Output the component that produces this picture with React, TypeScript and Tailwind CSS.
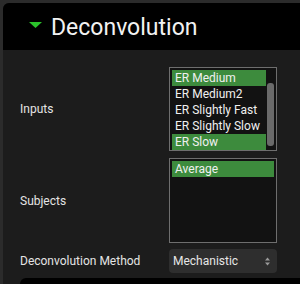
import React from 'react';

const inputs = ['ER Medium', 'ER Medium2', 'ER Slightly Fast', 'ER Slightly Slow', 'ER Slow'];
const selectedInputs = new Set(['ER Medium', 'ER Slow']);

function ListBox({ items, selected, scroll }: { items: string[]; selected: Set<string>; scroll?: boolean }) {
  return (
    <div className="flex h-full border border-[#6e6e6e] bg-[#121212] p-[2px]">
      <div className="flex-1 flex flex-col">
        {items.map(item => (
          <div
            key={item}
            className={`h-[16px] pl-[3px] text-[12px] leading-[16px] text-[#f0f0f0] ${
              selected.has(item) ? 'bg-[#3d8b3d]' : ''
            }`}
          >
            {item}
          </div>
        ))}
      </div>
      {scroll && (
        <div className="w-[7px] ml-[1px] flex flex-col pt-[13px] pb-[2px]">
          <div className="flex-1 rounded-[3px] bg-[#6a6a6a]" />
        </div>
      )}
    </div>
  );
}

export default function App() {
  return (
    <div
      className="w-[300px] h-[284px] overflow-hidden bg-[#2b2b2b] pt-[3px] pl-[3px]"
      style={{ fontFamily: 'Roboto, "Liberation Sans", sans-serif' }}
    >
      <div className="h-full flex flex-col rounded-tl-[6px] bg-[#1c1c1c] overflow-hidden">
        {/* Header */}
        <div className="h-[47px] shrink-0 bg-black flex items-center pl-[26px]">
          <svg width="13" height="6" viewBox="0 0 13 6" className="mr-[9px] mt-[-3px]">
            <polygon points="0,0 13,0 6.5,6" fill="#2bc32b" />
          </svg>
          <span className="text-[23px] leading-none text-[#f2f2f2] mt-[2px]">Deconvolution</span>
        </div>

        {/* Body */}
        <div className="flex-1 flex flex-col pl-[17px] pt-[17px]">
          <div className="flex items-center h-[84px]">
            <div className="w-[149px] text-[12px] text-[#e4e4e4]">Inputs</div>
            <div className="w-[108px] h-full">
              <ListBox items={inputs} selected={selectedInputs} scroll />
            </div>
          </div>

          <div className="flex items-center h-[85px] mt-[7px]">
            <div className="w-[149px] text-[12px] text-[#e4e4e4]">Subjects</div>
            <div className="w-[108px] h-full">
              <ListBox items={['Average']} selected={new Set(['Average'])} />
            </div>
          </div>

          <div className="flex items-center h-[24px] mt-[6px]">
            <div className="w-[149px] text-[12px] text-[#e4e4e4]">Deconvolution Method</div>
            <div className="w-[108px] h-full rounded-[4px] bg-[#2e2e2e] flex items-center justify-between pl-[4px] pr-[7px]">
              <span className="text-[12px] text-[#e6e6e6]">Mechanistic</span>
              <svg width="5" height="9" viewBox="0 0 5 9">
                <polygon points="0,3.5 5,3.5 2.5,0.5" fill="#9a9a9a" />
                <polygon points="0,5.5 5,5.5 2.5,8.5" fill="#9a9a9a" />
              </svg>
            </div>
          </div>

          <div className="mt-[5px] flex-1 rounded-tl-[6px] bg-black" />
        </div>
      </div>
    </div>
  );
}
